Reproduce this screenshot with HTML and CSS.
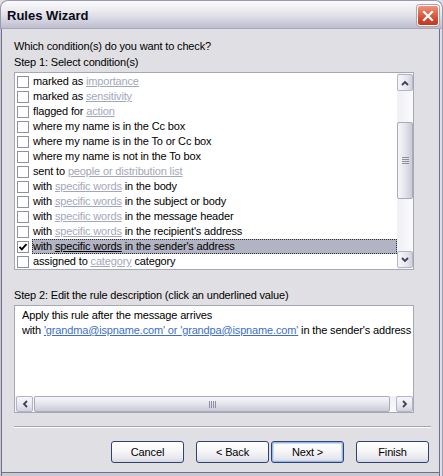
FILE: index.html
```html
<!DOCTYPE html>
<html>
<head>
<meta charset="utf-8">
<title>Rules Wizard</title>
<link rel="stylesheet" href="styles.css">
</head>
<body>
<div class="window">
  <div class="titlebar">
    <span class="title">Rules Wizard</span>
    <button class="close" aria-label="Close">
      <svg width="12" height="12" viewBox="0 0 12 12"><path d="M2 2L10 10M10 2L2 10" stroke="#fff" stroke-width="2.2" stroke-linecap="square" fill="none"/></svg>
    </button>
  </div>
  <div class="client">
    <div class="label">Which condition(s) do you want to check?</div>
    <div class="label">Step 1: Select condition(s)</div>
    <div class="listbox">
      <ul class="rows">
        <li class="row"><span class="cb"></span><span class="text">marked as <span class="link">importance</span></span></li>
        <li class="row"><span class="cb"></span><span class="text">marked as <span class="link">sensitivity</span></span></li>
        <li class="row"><span class="cb"></span><span class="text">flagged for <span class="link">action</span></span></li>
        <li class="row"><span class="cb"></span><span class="text">where my name is in the Cc box</span></li>
        <li class="row"><span class="cb"></span><span class="text">where my name is in the To or Cc box</span></li>
        <li class="row"><span class="cb"></span><span class="text">where my name is not in the To box</span></li>
        <li class="row"><span class="cb"></span><span class="text">sent to <span class="link">people or distribution list</span></span></li>
        <li class="row"><span class="cb"></span><span class="text">with <span class="link">specific words</span> in the body</span></li>
        <li class="row"><span class="cb"></span><span class="text">with <span class="link">specific words</span> in the subject or body</span></li>
        <li class="row"><span class="cb"></span><span class="text">with <span class="link">specific words</span> in the message header</span></li>
        <li class="row"><span class="cb"></span><span class="text">with <span class="link">specific words</span> in the recipient's address</span></li>
        <li class="row sel"><span class="cb"><svg width="10" height="10" viewBox="0 0 10 10"><path d="M1.5 4.8L3.8 7.3L8.5 2.2" stroke="#000" stroke-width="1.9" fill="none"/></svg></span><span class="text">with <span class="link">specific words</span> in the sender's address</span></li>
        <li class="row"><span class="cb"></span><span class="text">assigned to <span class="link">category</span> category</span></li>
      </ul>
      <div class="vscroll">
        <div class="sbtn vbtn"><svg width="8" height="6" viewBox="0 0 8 6"><path d="M1 5L4 2L7 5" stroke="#3f4058" stroke-width="1.8" fill="none"/></svg></div>
        <div class="vtrack"><div class="vthumb"><span class="grip-h"></span></div></div>
        <div class="sbtn vbtn"><svg width="8" height="6" viewBox="0 0 8 6"><path d="M1 1L4 4L7 1" stroke="#3f4058" stroke-width="1.8" fill="none"/></svg></div>
      </div>
    </div>
    <div class="label step2">Step 2: Edit the rule description (click an underlined value)</div>
    <div class="descbox">
      <div class="desc">
        <div>Apply this rule after the message arrives</div>
        <div>with <span class="vlink">'grandma@ispname.com' or 'grandpa@ispname.com'</span> in the sender's address</div>
      </div>
      <div class="hscroll">
        <div class="sbtn hbtn"><svg width="6" height="8" viewBox="0 0 6 8"><path d="M5 1L2 4L5 7" stroke="#3f4058" stroke-width="1.8" fill="none"/></svg></div>
        <div class="htrack"><div class="hthumb"><span class="grip-v"></span></div></div>
        <div class="sbtn hbtn"><svg width="6" height="8" viewBox="0 0 6 8"><path d="M1 1L4 4L1 7" stroke="#3f4058" stroke-width="1.8" fill="none"/></svg></div>
      </div>
    </div>
    <div class="sep"></div>
    <div class="buttons">
      <button class="btn">Cancel</button>
      <button class="btn gap-lg">&lt; Back</button>
      <button class="btn btn-default gap-sm">Next &gt;</button>
      <button class="btn gap-lg">Finish</button>
    </div>
  </div>
</div>
</body>
</html>
```

FILE: styles.css
```css
html, body {
  margin: 0;
  padding: 0;
  background: #ffffff;
}

body {
  font-family: "Liberation Sans", Arial, sans-serif;
  font-size: 11px;
  letter-spacing: -0.15px;
  color: #000;
}

.window {
  width: 443px;
  height: 476px;
  display: flex;
  flex-direction: column;
  background: #e0dfe3;
}

.titlebar {
  flex: none;
  height: 29px;
  box-sizing: border-box;
  display: flex;
  justify-content: space-between;
  align-items: flex-start;
  padding: 4px 3px 0 6px;
  border: 1px solid #9a9aae;
  border-bottom-color: #a6a6ba;
  border-radius: 8px 8px 0 0;
  background: linear-gradient(to bottom, #fbfbfd 0%, #f0f0f4 25%, #dfdfe8 55%, #cbcbd9 82%, #bcbccd 100%);
}

.title {
  font-weight: bold;
  font-size: 13px;
  line-height: 21px;
  letter-spacing: 0;
  color: #0a0a14;
}

.close {
  width: 22px;
  height: 21px;
  box-sizing: border-box;
  padding: 0;
  border: 1px solid #ffffff;
  border-radius: 3px;
  box-shadow: 0 0 0 1px #b9a0a4;
  background: linear-gradient(to bottom, #ee957c 0%, #df664a 40%, #cc452b 75%, #bd3a23 100%);
  display: flex;
  align-items: center;
  justify-content: center;
}

.client {
  flex: 1;
  display: flex;
  flex-direction: column;
  padding: 9px 12px 0 14px;
  box-shadow:
    inset 1px 0 0 #c8c8d3,
    inset 2px 0 0 #6f6f8a,
    inset -1px 0 0 #9a9aae,
    inset -3px 0 0 #e0dfe3,
    inset -4px 0 0 #6f6f8a,
    inset 0 -3px 0 #c8c8d3,
    inset 0 -4px 0 #6f6f8a;
}

.label {
  line-height: 16px;
  white-space: nowrap;
}

.step2 {
  margin-top: 17px;
}

.listbox {
  margin-top: 2px;
  width: 400px;
  height: 198px;
  box-sizing: border-box;
  border: 1px solid #a5a9b5;
  background: #fff;
  display: flex;
}

.rows {
  list-style: none;
  margin: 0;
  padding: 1px 0 0;
  flex: 1;
  min-width: 0;
  overflow: hidden;
}

.row {
  height: 15px;
  display: flex;
  align-items: center;
}

.cb {
  flex: none;
  width: 12px;
  height: 12px;
  box-sizing: border-box;
  border: 1px solid #8e909f;
  margin: 0 3px 0 2px;
  background: #fff;
  display: flex;
  align-items: center;
  justify-content: center;
}

.text {
  flex: 1;
  height: 15px;
  line-height: 15px;
  padding-left: 1px;
  white-space: nowrap;
  overflow: hidden;
}

.row.sel .text {
  background: #b3b4c3;
  outline: 1px dotted #2c2c34;
  outline-offset: -1px;
}

.link {
  color: #a3a7bb;
  text-decoration: underline;
}

.row.sel .link {
  color: #000;
}

.vscroll {
  flex: none;
  width: 16px;
  display: flex;
  flex-direction: column;
  padding: 1px 0;
  background: linear-gradient(to right, #efeff4, #fbfbfd);
}

.sbtn {
  flex: none;
  box-sizing: border-box;
  border: 1px solid #b3b5c6;
  border-radius: 2px;
  display: flex;
  align-items: center;
  justify-content: center;
}

.vbtn {
  height: 17px;
  background: linear-gradient(to right, #f7f7fa, #e6e6ee 60%, #d2d2de);
}

.vtrack {
  flex: 1;
}

.vthumb {
  margin-top: 31px;
  height: 77px;
  box-sizing: border-box;
  border: 1px solid #a9abbd;
  border-radius: 2px;
  background: linear-gradient(to right, #f7f7fa, #e4e4ec 50%, #cacad8);
  display: flex;
  align-items: center;
  justify-content: center;
}

.grip-h {
  width: 7px;
  height: 7px;
  background: repeating-linear-gradient(to bottom, #8d8ea3 0 1px, transparent 1px 2px);
}

.descbox {
  margin-top: 2px;
  width: 400px;
  height: 108px;
  box-sizing: border-box;
  border: 1px solid #a5a9b5;
  background: #fff;
  display: flex;
  flex-direction: column;
}

.desc {
  flex: 1;
  padding: 2px 0 0 7px;
  line-height: 15px;
  white-space: nowrap;
  overflow: hidden;
}

.vlink {
  color: #3d6fc6;
  text-decoration: underline;
}

.hscroll {
  flex: none;
  height: 16px;
  display: flex;
  padding-left: 1px;
  background: linear-gradient(to bottom, #efeff4, #fbfbfd);
}

.hbtn {
  width: 17px;
  height: 16px;
  background: linear-gradient(to bottom, #f7f7fa, #e6e6ee 60%, #d2d2de);
}

.htrack {
  flex: 1;
  display: flex;
}

.hthumb {
  flex: 1;
  margin: 0 6px 0 1px;
  box-sizing: border-box;
  border: 1px solid #a9abbd;
  border-radius: 2px;
  background: linear-gradient(to bottom, #f7f7fa, #e4e4ec 50%, #cacad8);
  display: flex;
  align-items: center;
  justify-content: center;
}

.grip-v {
  width: 7px;
  height: 7px;
  background: repeating-linear-gradient(to right, #8d8ea3 0 1px, transparent 1px 2px);
}

.sep {
  margin-top: 13px;
  height: 0;
  border-top: 1px solid #a3a3ab;
  border-bottom: 1px solid #ffffff;
}

.buttons {
  margin-top: 13px;
  display: flex;
  justify-content: flex-end;
  padding-right: 2px;
}

.btn {
  width: 73px;
  height: 22px;
  box-sizing: border-box;
  padding: 0;
  border: 1px solid #2f4371;
  border-radius: 3px;
  background: linear-gradient(to bottom, #ffffff 0%, #f6f6f8 45%, #e8e8ee 80%, #d6d7e1 100%);
  font-family: "Liberation Sans", Arial, sans-serif;
  font-size: 11px;
  letter-spacing: -0.15px;
  color: #000;
}

.btn-default {
  box-shadow: inset 0 0 0 1px #9ab5e6, inset 0 0 0 2px #cbdaf4;
}

.gap-lg {
  margin-left: 12px;
}

.gap-sm {
  margin-left: 2px;
}
```
